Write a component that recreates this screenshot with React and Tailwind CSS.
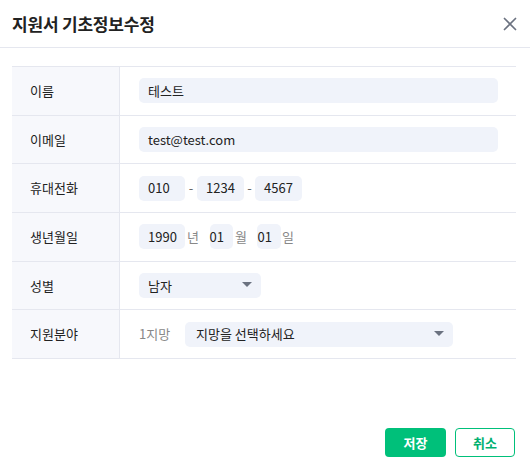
import React from "react";

const font = { fontFamily: '"Noto Sans CJK KR", "Noto Sans", sans-serif' };

function Caret() {
  return (
    <svg width="10" height="6" viewBox="0 0 10 6" className="shrink-0">
      <path d="M0 0 L10 0 L5 5 Z" fill="#6b7280" />
    </svg>
  );
}

function Row({ label, children }) {
  return (
    <div className="flex h-[48.67px] border-b border-[#e5e7ef]">
      <div className="w-[108px] shrink-0 bg-[#f7f8fc] border-r border-[#e5e7ef] flex items-center pl-[18px] text-[13px] text-[#222]">
        {label}
      </div>
      <div className="flex-1 flex items-center pl-[19px] text-[13px] text-[#222]">
        {children}
      </div>
    </div>
  );
}

export default function App() {
  const box = "h-[25px] rounded-[5px] bg-[#f0f3fa] flex items-center px-[9px] text-[13px] text-[#222]";
  return (
    <div style={font} className="w-[530px] h-[469px] bg-white relative">
      <div className="h-[48px] border-b border-[#e5e7ef] flex items-center justify-between pl-[12px] pr-[13px]">
        <div className="text-[17px] font-bold text-[#222] tracking-[-0.2px]">지원서 기초정보수정</div>
        <svg width="14" height="14" viewBox="0 0 14 14">
          <path d="M1.5 1.5 L12.5 12.5 M12.5 1.5 L1.5 12.5" stroke="#6b7280" strokeWidth="1.7" strokeLinecap="round" />
        </svg>
      </div>
      <div className="mx-[12px] mt-[18px] border-t border-[#e5e7ef] w-[504px]">
        <Row label="이름">
          <div className={`${box} w-[359px]`}>테스트</div>
        </Row>
        <Row label="이메일">
          <div className={`${box} w-[359px] bg-[#e8effc]`}>test@test.com</div>
        </Row>
        <Row label="휴대전화">
          <div className={`${box} w-[46px]`}>010</div>
          <span className="w-[12px] text-center text-[#666]">-</span>
          <div className={`${box} w-[47px]`}>1234</div>
          <span className="w-[11px] text-center text-[#666]">-</span>
          <div className={`${box} w-[47px]`}>4567</div>
        </Row>
        <Row label="생년월일">
          <div className={`${box} w-[46px]`}>1990</div>
          <span className="ml-[2px] w-[23px] text-[#888]">년</span>
          <div className={`${box} w-[23px] px-0 justify-end`}>01</div>
          <span className="ml-[2px] w-[22px] text-[#888]">월</span>
          <div className={`${box} w-[24px] px-0 justify-end`}>01</div>
          <span className="ml-[1px] text-[#888]">일</span>
        </Row>
        <Row label="성별">
          <div className={`${box} w-[122px] justify-between pr-[9px]`}>
            <span>남자</span>
            <Caret />
          </div>
        </Row>
        <Row label="지원분야">
          <span className="w-[46px] text-[#888]">1지망</span>
          <div className={`${box} w-[268px] justify-between pr-[9px] pl-[11px]`}>
            <span>지망을 선택하세요</span>
            <Caret />
          </div>
        </Row>
      </div>
      <div className="absolute right-[15px] top-[428px] flex gap-[9px]">
        <button className="w-[61px] h-[29px] rounded-[4px] bg-[#00c07a] text-white text-[13px] font-bold">저장</button>
        <button className="w-[60px] h-[29px] rounded-[4px] border border-[#00c07a] bg-white text-[#00b070] text-[13px] font-bold">취소</button>
      </div>
    </div>
  );
}
